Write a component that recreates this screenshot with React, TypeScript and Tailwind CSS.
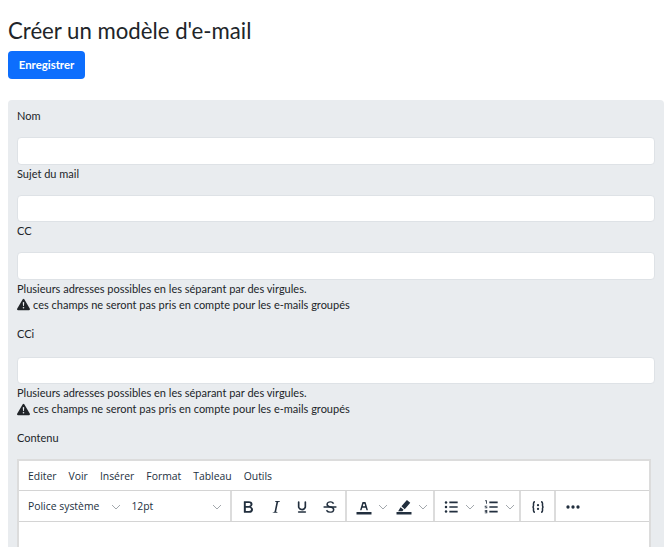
const Chevron = ({ className = "" }: { className?: string }) => (
  <svg viewBox="0 0 10 6" className={`h-[6px] w-[10px] ${className}`} fill="none" stroke="#a3a8ad" strokeWidth="1">
    <path d="M1 1l4 4 4-4" />
  </svg>
);

const Icon = ({ children }: { children: React.ReactNode }) => (
  <svg viewBox="0 0 24 24" className="h-[20px] w-[20px] shrink-0" fill="#222f3e">
    {children}
  </svg>
);

function Field({ label, help, labelGap = false }: { label: string; help?: boolean; labelGap?: boolean }) {
  return (
    <div>
      <label className="block h-[18px] text-[11px] leading-[18px] text-[#212529]">{label}</label>
      <input className={`block h-[27.5px] w-full rounded-[4px] border border-[#dee2e6] bg-white ${labelGap ? "mt-[14px]" : "mt-[12px]"}`} />
      {help && (
        <div className="text-[11px] leading-[16px] text-[#212529]">
          <div className="pt-[1px]">Plusieurs adresses possibles en les séparant par des virgules.</div>
          <div className="flex items-center gap-[3px]">
            <svg viewBox="0 0 16 16" className="h-[13px] w-[13px]" fill="#212529">
              <path d="M8.98 1.56a1.13 1.13 0 00-1.96 0L.165 13.233c-.457.778.091 1.767.98 1.767h13.713c.889 0 1.438-.99.98-1.767L8.982 1.566zM8 5c.535 0 .954.462.9.995l-.35 3.507a.552.552 0 01-1.1 0L7.1 5.995A.905.905 0 018 5zm.002 6a1 1 0 110 2 1 1 0 010-2z" />
            </svg>
            <span>ces champs ne seront pas pris en compte pour les e-mails groupés</span>
          </div>
        </div>
      )}
    </div>
  );
}

function Toolbar() {
  return (
    <div className="flex h-[31px] items-stretch border-b border-[#d4d4d4] text-[#222f3e]">
      <div className="flex w-[213px] items-center border-r-2 border-[#dcdcdc] pt-[2px] pl-[9px]">
        <span>Police système</span>
        <Chevron className="ml-[12px]" />
        <span className="ml-[10px]">12pt</span>
        <Chevron className="ml-auto mr-[8px]" />
      </div>
      <div className="flex w-[115px] items-center gap-[8px] border-r-2 border-[#dcdcdc] pt-[1px] pl-[6px]">
        <Icon>
          <path d="M7.8 19c-.3 0-.5 0-.6-.2l-.2-.5V5.7c0-.2 0-.4.2-.5l.6-.2h5c1.5 0 2.7.3 3.5 1 .7.6 1.1 1.4 1.1 2.5a3 3 0 01-.6 1.9c-.4.6-1 1-1.6 1.2.4.1.9.3 1.3.6s.8.7 1 1.2c.4.4.5 1 .5 1.6 0 1.3-.4 2.3-1.3 3-.8.7-2.1 1-3.8 1H7.8zm5-8.3c.6 0 1.2-.1 1.6-.5.4-.3.6-.7.6-1.3 0-1.1-.8-1.7-2.3-1.7H9.3v3.5h3.4zm.5 6c.7 0 1.3-.1 1.7-.4.4-.4.6-.9.6-1.5s-.2-1-.7-1.4c-.4-.3-1-.4-2-.4H9.4v3.8h4z" />
        </Icon>
        <Icon>
          <path d="M16.7 4.7l-.1.9h-.3c-.6 0-1 0-1.4.3-.3.3-.4.6-.5 1.1l-2.1 9.8v.6c0 .5.4.8 1.4.8h.2l-.2.8H8l.2-.8h.2c1.1 0 1.8-.5 2-1.5l2-9.8.1-.5c0-.6-.4-.8-1.4-.8h-.3l.2-.9h5.8z" />
        </Icon>
        <span className="-ml-[2px] flex">
          <Icon>
            <path d="M16 5c.6 0 1 .4 1 1v5.500a4 4 0 01-.4 1.800l-1 1.400a5.300 5.300 0 01-5.500 1 5 5 0 01-1.600-1c-.5-.4-.8-.9-1.100-1.400a4 4 0 01-.4-1.800V6c0-.6.4-1 1-1s1 .4 1 1v5.500c0 .3 0 .6.2 1l.6.7a3.300 3.300 0 002.200.8 3.400 3.400 0 002.200-.8c.3-.2.4-.5.6-.8l.2-.9V6c0-.6.4-1 1-1zM8 17h8c.6 0 1 .4 1 1s-.4 1-1 1H8a1 1 0 010-2z" />
          </Icon>
        </span>
        <Icon>
          <path d="M15.6 8.5c-.5-.7-1-1.100-1.300-1.300-.6-.4-1.300-.6-2-.6-2.700 0-2.800 1.700-2.800 2.100 0 1.600 1.800 2 3.200 2.300 4.400.9 4.600 2.800 4.600 3.900 0 1.400-.7 4.100-5 4.100A6.200 6.200 0 017 16.400l1.500-1.100c.4.6 1.600 2 3.700 2 1.600 0 2.500-.4 3-1.200.4-.8.3-2-.8-2.600-.7-.4-1.600-.7-2.900-1-1-.2-3.900-.8-3.900-3.600C7.600 6 10.300 5 12.400 5c2.900 0 4.200 1.600 4.700 2.400l-1.500 1.100z" />
          <path d="M5 11h14a1 1 0 010 2H5a1 1 0 010-2z" />
        </Icon>
      </div>
      <div className="flex w-[88px] items-center border-r-2 border-[#dcdcdc] pt-[1px] pl-[7px]">
        <Icon>
          <path d="M3 18h18v3H3z" />
          <path d="M8.7 16h-.8a.5.5 0 01-.5-.6l2.700-9c.1-.3.3-.4.5-.4h2.800c.2 0 .4.1.5.4l2.700 9a.5.5 0 01-.5.6h-.8a.5.5 0 01-.4-.4l-.7-2.200c0-.3-.3-.4-.5-.4h-3.400c-.2 0-.4.1-.5.4l-.7 2.200c0 .3-.2.4-.4.4zm2.600-7.600l-.6 2a.5.5 0 00.5.6h1.600a.5.5 0 00.5-.6l-.6-2c0-.3-.3-.4-.5-.4h-.4c-.2 0-.4.1-.5.4z" />
        </Icon>
        <Chevron className="ml-[4px]" />
        <span className="ml-[6px] flex">
          <Icon>
            <path d="M3 18h18v3H3z" />
            <path d="M15.5 3.600l4 3.400-6.600 7.600-4-3.400zM7.900 12.200l3.600 3.100-1.500 1.700H5z" />
          </Icon>
        </span>
        <Chevron className="ml-[4px]" />
      </div>
      <div className="flex w-[86px] items-center border-r-2 border-[#dcdcdc] pt-[1px] pl-[6px]">
        <Icon>
          <path d="M10 5.500h10v2H10zM10 11h10v2H10zM10 16.500h10v2H10z" />
          <circle cx="6" cy="6.500" r="1.500" />
          <circle cx="6" cy="12" r="1.500" />
          <circle cx="6" cy="17.500" r="1.500" />
        </Icon>
        <Chevron className="ml-[4px]" />
        <span className="ml-[6px] flex">
          <Icon>
            <path d="M10 5.500h10v2H10zM10 11h10v2H10zM10 16.500h10v2H10z" />
            <path d="M5 4h2v4H6V5H5zM4.500 10.500h3v1h-2v.5h2v1.500h-3v-1h2V12h-2zM4.500 15.500h3v4h-3v-1h2V18h-2v-1h2v-.5h-2z" />
          </Icon>
        </span>
        <Chevron className="ml-[4px]" />
      </div>
      <div className="flex w-[35px] items-center justify-center border-r-2 border-[#dcdcdc] pt-[1px]">
        <svg viewBox="0 0 24 24" className="h-[18px] w-[18px]" fill="none" stroke="#222f3e" strokeWidth="2">
          <path d="M8 5c-1.500 0-2 .8-2 2v3.200c0 .9-.5 1.800-1.500 1.800 1 0 1.500.9 1.500 1.800V17c0 1.200.5 2 2 2" />
          <path d="M16 5c1.500 0 2 .8 2 2v3.200c0 .9.5 1.800 1.500 1.800-1 0-1.500.9-1.500 1.800V17c0 1.200-.5 2-2 2" />
          <circle cx="12" cy="9.500" r="1.500" fill="#222f3e" stroke="none" />
          <circle cx="12" cy="14.500" r="1.500" fill="#222f3e" stroke="none" />
        </svg>
      </div>
      <div className="flex items-center pt-[1px] pl-[7px]">
        <Icon>
          <circle cx="6" cy="12" r="2" />
          <circle cx="12" cy="12" r="2" />
          <circle cx="18" cy="12" r="2" />
        </Icon>
      </div>
    </div>
  );
}

export default function App() {
  return (
    <div className="h-[547px] overflow-hidden bg-white pr-[6px] pl-[8px] pt-[18px] font-['Lato',sans-serif] text-[#212529]">
      <h1 className="text-[22.2px] leading-[25px]">Créer un modèle d'e-mail</h1>
      <button className="mt-[8px] block h-[28px] w-[77px] rounded-[4px] bg-[#0d6efd] text-[11.4px] font-bold text-white">
        Enregistrer
      </button>
      <div className="mt-[21px] rounded-[4px] bg-[#e9ecef] px-[9px] pt-[7px] pb-[20px]">
        <Field label="Nom" />
        <Field label="Sujet du mail" />
        <Field label="CC" help />
        <div className="mt-[12px]">
          <Field label="CCi" help labelGap />
        </div>
        <div className="mt-[12px] h-[18px] text-[11px] leading-[18px]">Contenu</div>
        <div className="mt-[12px] mr-[4px] h-[200px] border-2 border-[#dcdcdc] bg-white font-['Open_Sans',sans-serif] text-[10.4px]">
          <div className="flex h-[30px] items-center gap-[12px] border-b border-[#d4d4d4] pt-[2px] pl-[9px] text-[#222f3e]">
            <span>Editer</span>
            <span>Voir</span>
            <span>Insérer</span>
            <span>Format</span>
            <span>Tableau</span>
            <span>Outils</span>
          </div>
          <Toolbar />
        </div>
      </div>
    </div>
  );
}
